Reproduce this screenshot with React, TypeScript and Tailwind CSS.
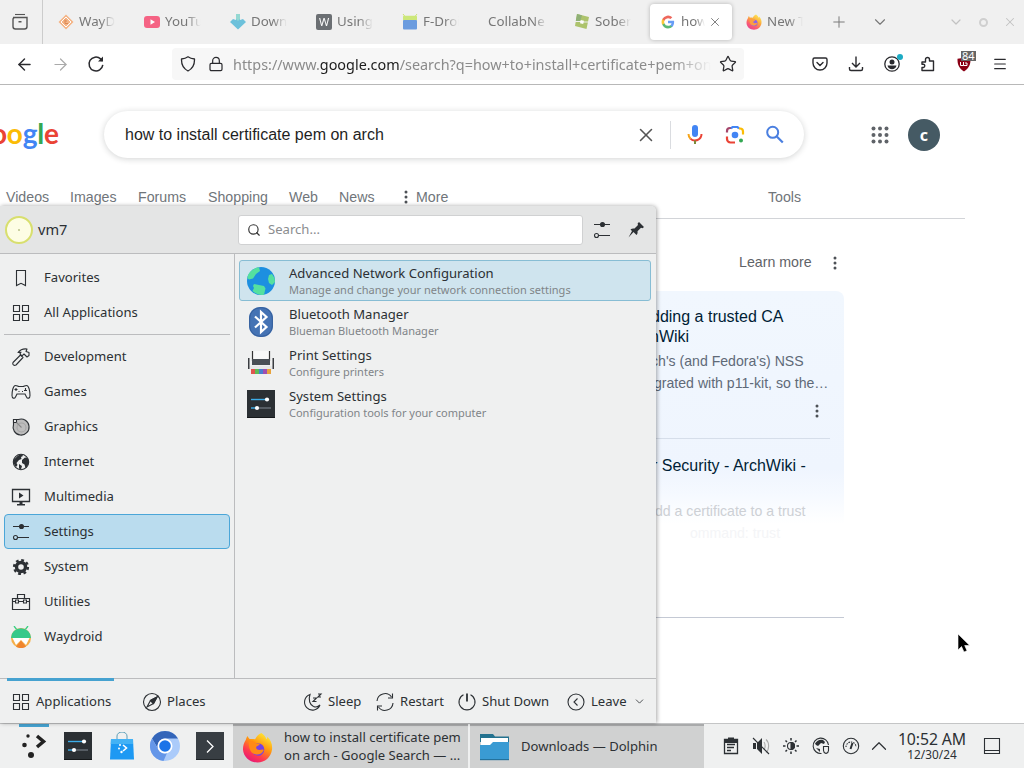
import React from 'react';
import { ArrowLeft, ArrowRight, ChevronDown, ChevronUp, Lock, Menu, Plus, Search, Star, X } from 'lucide-react';
import clsx from 'clsx';

interface IconProps {
  size?: number;
  box?: number;
  className?: string;
  children: React.ReactNode;
}

// Line icon on a square grid, strokes follow the text colour
const Line: React.FC<IconProps> = ({ size = 22, box = 22, className, children }) => (
  <svg
    width={size}
    height={size}
    viewBox={`0 0 ${box} ${box}`}
    fill="none"
    stroke="currentColor"
    strokeWidth="1.1"
    className={clsx('shrink-0', className)}
  >
    {children}
  </svg>
);

const Pic: React.FC<IconProps> = ({ size = 16, box = 16, className, children }) => (
  <svg width={size} height={size} viewBox={`0 0 ${box} ${box}`} className={clsx('shrink-0', className)}>
    {children}
  </svg>
);

const GridIcon = () => (
  <Line>
    <path d="M3.5 3.5h6v6h-6zM12.5 3.5h6v6h-6zM3.5 12.5h6v6h-6zM12.5 12.5h6v6h-6z" />
  </Line>
);

const SlidersIcon = () => (
  <Line>
    <path d="M3 5.5h16M7.5 16.5H19" />
    <circle cx="11.5" cy="5.5" r="2" fill="currentColor" />
    <circle cx="5.5" cy="16.5" r="2" />
  </Line>
);

const SettingsTile = ({ size = 28 }: { size?: number }) => (
  <Pic size={size} box={28}>
    <rect width="28" height="28" fill="#2b3034" />
    <path d="M0 27h28v1H0z" fill="#15181a" />
    <path d="M4 9.5h16" stroke="#3daee9" strokeWidth="1.4" />
    <path d="M12 18h12" stroke="#69727a" strokeWidth="1.4" />
    <path d="M4 18h6" stroke="#3daee9" strokeWidth="1.4" />
    <circle cx="20" cy="9.5" r="2.1" fill="#fff" />
    <circle cx="10" cy="18" r="2.1" fill="#fff" />
  </Pic>
);

const FirefoxIcon = ({ size = 16 }: { size?: number }) => (
  <Pic size={size} box={32}>
    <defs>
      <linearGradient id="fx" x1="0.8" y1="0" x2="0.2" y2="1">
        <stop offset="0" stopColor="#fff13a" />
        <stop offset="0.4" stopColor="#ff980e" />
        <stop offset="0.7" stopColor="#ff3b4f" />
        <stop offset="1" stopColor="#e3127e" />
      </linearGradient>
    </defs>
    <path
      d="M20 1c3 2 4.500 4 5 6.500 1-.5 1-1.500 1-2.500C30 8.500 31.500 13 31 18c-1 8-7.500 13.500-15 13.500S1.500 26 1 18c0-4 1-7 3-10 .5-2 1-3 2-4 .3 1.500 1 2.500 2 3.300 2-.3 4-.2 5.500.3C15.500 4 17 2 20 1z"
      fill="url(#fx)"
    />
    <circle cx="16.500" cy="18" r="6.500" fill="#7542e5" />
    <path d="M7 10c3-1 5.500-.5 7.500 1.500l4 .5c-.5 1.800-2.500 2-3.500 3-1 1.500 0 3.500 3 3.500 2 0 3-.8 4.500 0-1.500 4-5.500 5.500-9 4.500C9 22 6.500 17 7 10z" fill="#ff8a16" />
  </Pic>
);

const GoogleG = () => (
  <Pic size={14} box={24} className="opacity-80">
    <path d="M22.500 12.200c0-.8 0-1.500-.2-2.200H12v4.300h6a5 5 0 0 1-2.200 3.400v2.800h3.600c2-2 3.100-4.800 3.100-8.300z" fill="#4285f4" />
    <path d="M12 23c3 0 5.500-1 7.300-2.700l-3.600-2.800c-1 .7-2.200 1-3.700 1a6.600 6.600 0 0 1-6.200-4.500H2.200v2.800A11 11 0 0 0 12 23z" fill="#34a853" />
    <path d="M5.800 14a6.600 6.600 0 0 1 0-4.200V7H2.200a11 11 0 0 0 0 9.900z" fill="#fbbc05" />
    <path d="M12 5.400c1.600 0 3 .6 4.200 1.600l3.200-3.100A11 11 0 0 0 2.200 7l3.600 2.900A6.600 6.600 0 0 1 12 5.400z" fill="#ea4335" />
  </Pic>
);

const tabs: { title: string; icon?: React.ReactNode; active?: boolean }[] = [
  {
    title: 'WayDr',
    icon: (
      <Pic>
        <path d="M8 .5 15.500 8 8 15.500.5 8z" fill="#f6a66c" />
        <path d="M8 3 13 8 8 13 3 8z" fill="none" stroke="#fff" />
        <path d="M7 5.500v4h3M7 7h2" stroke="#d86f2c" fill="none" />
      </Pic>
    ),
  },
  {
    title: 'YouTu',
    icon: (
      <Pic>
        <rect y="2" width="16" height="12" rx="3" fill="#f7406a" />
        <path d="M6.500 5.300v5.400L11 8z" fill="#fff" />
      </Pic>
    ),
  },
  {
    title: 'Down',
    icon: (
      <Pic>
        <path d="M6 0h4v6l3-1 3 3-8 7.500L0 8l3-3 3 1z" fill="#4db6d6" />
        <path d="M6 0h4v5l-2 2-2-2z" fill="#7ed3cb" />
      </Pic>
    ),
  },
  {
    title: 'Using',
    icon: (
      <span className="flex size-4 shrink-0 items-center justify-center rounded-[2px] bg-[#4b5055] text-[11px] text-white">W</span>
    ),
  },
  {
    title: 'F-Droi',
    icon: (
      <Pic>
        <path d="M1 0 3 2.500M15 0l-2 2.500" stroke="#c0de50" />
        <rect x="1" y="1.800" width="14" height="5" rx="1" fill="#c4e65c" />
        <rect x="1" y="6" width="14" height="9.500" rx="1" fill="#4a88dc" />
      </Pic>
    ),
  },
  { title: 'CollabNe' },
  {
    title: 'Sober',
    icon: (
      <Pic>
        <path d="M3 0l12 3-2.500 12L1 12z" fill="#9db84c" />
        <path d="M3 0l5 1.300L6 8 1.800 7z" fill="#77a158" />
        <path d="M0 7.500h7M9 8h7" stroke="#f0f0f0" strokeWidth="1.200" />
        <path d="m6.700 6 3.300.8-.8 3.200L6 9.200z" fill="#fff" />
      </Pic>
    ),
  },
  { title: 'how', icon: <GoogleG />, active: true },
  { title: 'New T', icon: <FirefoxIcon /> },
];

const TabBar = () => (
  <div className="flex h-[44px] shrink-0 items-center bg-[#f0f0f0] text-[13.330px] text-[#777]">
    <div className="mr-[5px] flex h-full w-[43px] items-center justify-center border-r border-[#ccc] pr-[3px] text-[#555]">
      <Line size={18} box={18}>
        <path d="M4 1.500h10" />
        <path d="M2 4.500h14v9a2.500 2.500 0 0 1-2.500 2.500h-9A2.500 2.500 0 0 1 2 13.500v-7a2 2 0 0 1 2-2M7.500 8.800h3" strokeWidth="1.400" />
      </Line>
    </div>
    {tabs.map((tab) => (
      <div
        key={tab.title}
        className={clsx(
          'mr-1 flex h-9 w-[82px] shrink-0 items-center rounded pl-2.5',
          tab.active && 'bg-white shadow-[0_0_4px_rgba(0,0,0,0.25)]'
        )}
      >
        {tab.icon && (
          <span className={clsx('mr-[5px] flex w-4 justify-center', !tab.active && 'opacity-80')}>{tab.icon}</span>
        )}
        <span
          className={clsx(
            'whitespace-nowrap',
            tab.active ? 'w-6' : tab.icon ? 'w-9' : 'w-[60px]',
            tab.icon
              ? '[mask-image:linear-gradient(to_right,black_60%,transparent)]'
              : '[mask-image:linear-gradient(to_right,black_75%,transparent)]'
          )}
        >
          {tab.title}
        </span>
        {tab.active && <X size={14} strokeWidth={1.600} className="ml-[3px] shrink-0" />}
      </div>
    ))}
    <Plus size={18} strokeWidth={1.300} className="ml-[8px]" />
    <ChevronDown size={18} strokeWidth={1.500} className="ml-[23px]" />
    <div className="ml-auto flex items-center text-[#c2c2c2]">
      <ChevronDown size={16} strokeWidth={1.800} />
      <span className="mx-[15px] size-[9px] rounded-full border-2 border-[#cfcfcf]" />
      <X size={14} strokeWidth={1.800} className="mr-[7px]" />
    </div>
  </div>
);

const NavBar = () => (
  <div className="flex h-[41px] shrink-0 items-center border-b border-[#b8b8b8] bg-white text-[#2a2a2e]">
    <div className="flex w-[172px] items-center pl-[15px]">
      <ArrowLeft size={19} strokeWidth={1.800} />
      <ArrowRight size={19} strokeWidth={1.500} className="ml-[17px] text-[#aaa]" />
      <Line size={18} box={18} className="ml-[17px]">
        <path d="M15.800 9.800a6.900 6.900 0 1 1-2.200-5.900L15.500 6" strokeWidth="1.500" />
        <path d="M16 1.500v5h-5z" fill="currentColor" stroke="none" />
      </Line>
    </div>
    <div className="flex h-8 w-[572px] items-center rounded bg-[#f7f7f7] pl-2">
      <Line size={16} box={16}>
        <path d="M8 .8c2 1.500 4 2 6.500 2.200.2 5-1.500 9.500-6.500 12C3 12.500 1.300 8 1.500 3 4 2.800 6 2.300 8 .8z" strokeWidth="1.300" strokeLinejoin="round" />
      </Line>
      <Lock size={16} strokeWidth={1.800} className="ml-3" />
      <span className="mt-px ml-[9px] w-[478px] text-[14.400px] whitespace-nowrap text-[#8b8b8b] [mask-image:linear-gradient(to_right,black_92%,transparent)]">
        https://www.<span className="text-[#1c1c1c]">google.com</span>/search?q=how+to+install+certificate+pem+on+
      </span>
      <Star size={18} strokeWidth={1.700} className="ml-[8px]" />
    </div>
    <div className="ml-auto flex pr-1.5 [&>*]:w-9 [&>*]:flex [&>*]:justify-center">
      <span>
        <Line size={16} box={16}>
          <path d="M2.500 2h11A1.500 1.500 0 0 1 15 3.500V7a7 7 0 0 1-14 0V3.500A1.500 1.500 0 0 1 2.500 2zM5 6.500l3 3 3-3" strokeWidth="1.400" strokeLinecap="round" />
        </Line>
      </span>
      <span>
        <Line size={16} box={16}>
          <path d="M8 .5v10M4 7l4 4 4-4M1.500 11v2a1.500 1.500 0 0 0 1.500 1.500h10a1.500 1.500 0 0 0 1.500-1.500v-2" strokeWidth="1.400" />
        </Line>
      </span>
      <span className="relative">
        <Line size={16} box={16}>
          <circle cx="8" cy="8" r="7.200" strokeWidth="1.300" />
          <circle cx="8" cy="6" r="2.500" fill="currentColor" stroke="none" />
          <path d="M3.500 9.500h9c-.5 2.500-2.300 3.800-4.500 3.800s-4-1.300-4.500-3.800z" fill="currentColor" stroke="none" />
        </Line>
        <i className="absolute -top-[2px] left-[23px] size-[6px] rounded-full bg-[#1cabc4]" />
      </span>
      <span>
        <Line size={16} box={16}>
          <path d="M2 6h3.500V3.500a2 2 0 0 1 4 0V5H13.500v9.500H2V11.500h1.500a1.700 1.700 0 0 0 0-3.300H2z" strokeWidth="1.400" strokeLinejoin="round" />
        </Line>
      </span>
      <span className="relative">
        <Pic>
          <path d="M8 1c2 1.200 4 1.600 6.500 1.800.2 5.500-1.500 9.700-6.500 12.700C3 12.500 1.300 8.300 1.500 2.800 4 2.600 6 2.200 8 1z" fill="#8b0015" />
          <path d="M4.500 6v3.500h3V6m0 3.500h3.500V7h-2" stroke="#fff" fill="none" />
        </Pic>
        <b className="absolute -top-[5px] left-[15px] h-[10px] bg-[#666] px-px text-[11px] leading-[10px] font-normal text-white">84</b>
      </span>
      <span>
        <Menu size={16} strokeWidth={1.700} />
      </span>
    </div>
  </div>
);

const Dots = () => (
  <svg width="4" height="14" fill="#4d5156" className="shrink-0">
    <circle cx="2" cy="2" r="1.500" />
    <circle cx="2" cy="7" r="1.500" />
    <circle cx="2" cy="12" r="1.500" />
  </svg>
);

const SearchPage = () => (
  <div className="flex flex-1 flex-col bg-white font-['Liberation_Sans',Arial,sans-serif]">
    <div className="mt-[26px] flex h-[47px] items-center">
      <div className="mb-[3px] flex w-[104px] font-['Lato',sans-serif] text-[28px] leading-[36px] font-bold">
        <div className="-ml-[9px] flex tracking-[-0.250px]">
          <span className="text-[#ea4335]">o</span>
          <span className="text-[#fbbc05]">o</span>
          <span className="text-[#4285f4]">g</span>
          <span className="text-[#34a853]">l</span>
          <span className="text-[#ea4335]">e</span>
        </div>
      </div>
      <div className="flex h-[47px] w-[700px] items-center rounded-full pl-[21px] shadow-[0_1px_6px_rgba(32,33,36,0.2)]">
        <span className="w-[510px] text-base text-[#1f1f1f]">how to install certificate pem on arch</span>
        <X size={22} strokeWidth={1.700} className="text-[#555]" />
        <span className="ml-[13px] h-[28px] w-px bg-[#dadce0]" />
        <Pic size={24} box={24} className="ml-3">
          <rect x="9" y="2" width="6" height="12" rx="3" fill="#4285f4" />
          <path d="M7.400 15.600A6.500 6.500 0 0 0 18.500 11" fill="none" stroke="#ea4335" strokeWidth="2" />
          <path d="M5.500 11a6.500 6.500 0 0 0 2 4.700" fill="none" stroke="#f6a51a" strokeWidth="2" />
          <path d="M12 17.500V21" stroke="#7b8c3a" strokeWidth="2" />
        </Pic>
        <Pic size={24} box={24} className="ml-4">
          <g fill="none" strokeWidth="2.200">
            <path d="M4 9.500V8a3 3 0 0 1 3-3h1.500" stroke="#a4456b" />
            <path d="M8 5.500 9.500 4h5L16 5.500" stroke="#4285f4" />
            <path d="M16 5.500h1a3 3 0 0 1 3 3v3" stroke="#fbbc05" />
            <path d="M4 13.500V16a3.500 3.500 0 0 0 3.500 3.500H12" stroke="#ea4335" />
          </g>
          <circle cx="12" cy="12" r="3.300" fill="#4285f4" />
          <circle cx="18" cy="17.500" r="2" fill="#34a853" />
        </Pic>
        <Pic size={24} box={24} className="ml-4">
          <circle cx="9.700" cy="9.300" r="5.500" fill="none" stroke="#4a7fe0" strokeWidth="2" />
          <path d="m13.800 13.500 6 6" stroke="#4a7fe0" strokeWidth="2.200" />
        </Pic>
      </div>
      <Pic size={18} box={18} className="ml-[67px]">
        {[2, 8.5, 15].map((y) => [2, 8.5, 15].map((x) => <circle key={`${x}-${y}`} cx={x + 0.5} cy={y + 0.5} r="2" fill="#5f6368" />))}
      </Pic>
      <div className="ml-[19px] flex size-8 items-center justify-center rounded-full bg-[#455a64] font-['Noto_Sans',sans-serif] text-base leading-4 font-bold text-white">
        c
      </div>
    </div>

    <div className="mt-[29px] flex h-[32px] w-[965px] border-b border-[#d2d4d8] pl-1.5 text-[14.200px] leading-5 text-[#70757a]">
      <span className="w-16">Videos</span>
      <span className="w-[68px]">Images</span>
      <span className="w-[70px]">Forums</span>
      <span className="w-[81px]">Shopping</span>
      <span className="w-[50px]">Web</span>
      <span className="w-[65px]">News</span>
      <span className="flex h-5 w-3 items-center"><Dots /></span>
      <span className="w-[352px]">More</span>
      <span>Tools</span>
    </div>

    <div className="ml-[648px] flex w-[196px] flex-col">
      <div className="mt-[34px] flex h-5 items-center pl-[91px] text-[14.200px] text-[#5f6368]">
        <span className="w-[94px]">Learn more</span>
        <Dots />
      </div>
      <div className="mt-[18px] h-[253px] rounded-r-lg bg-[linear-gradient(to_bottom,#f1f7fe,#eff5fe_70%,#f5f9ff_80%,white_92%)] pt-4 pr-3.5">
        <div className="text-base leading-5 whitespace-nowrap text-[#001d35]">
          <p className="pl-[3px]">dding a trusted CA</p>
          <p className="pl-[2px]">hWiki</p>
        </div>
        <div className="mt-[3px] text-[14.100px] leading-[22px] whitespace-nowrap text-[#5f6a78]">
          <p className="pl-[3px]">ch's (and Fedora's) NSS</p>
          <p className="pl-[6px]">grated with p11-kit, so the…</p>
        </div>
        <div className="mt-[10px] flex justify-end pr-[11px]"><Dots /></div>
        <div className="mt-5 border-b border-[#d6deea]" />
        <p className="mt-[17px] pl-[4px] text-base leading-5 text-[#001d35]">r Security - ArchWiki -</p>
        <div className="mt-[24px] text-[14.100px] leading-[22px] whitespace-nowrap">
          <p className="pl-[7px] text-[#cdd0d5]">dd a certificate to a trust</p>
          <p className="pl-[42px] text-[#f4f5f7]">ommand: trust</p>
        </div>
      </div>
      <div className="mt-[73px] border-b border-[#c4c9d4]" />
    </div>
  </div>
);

const categories: { name: string; icon: React.ReactNode; active?: boolean }[] = [
  {
    name: 'Development',
    icon: (
      <Line>
        <path d="m3 16.500 7.500-7.500 2.500 2.500L6 19c-2 1-4-.5-3-2.500zM8 6.500c2-2.500 5-4 9-3.500l-1 2.500 3 1v3l-2 1.500-3-3-2 1.800-2-2 1-1.500z" strokeLinejoin="round" />
      </Line>
    ),
  },
  {
    name: 'Games',
    icon: (
      <Line>
        <path d="M5.500 4.500c2 0 2 1 3.500 1h4c1.500 0 1.500-1 3.500-1 2.500 0 3.500 6 3.500 10 0 3-2.500 3.500-3.500 1.500l-1.500-3H7l-1.500 3C4.500 18 2 17.500 2 14.500c0-4 1-10 3.500-10z" />
        <path d="M6 7v3M4.500 8.500h3M15.500 7v3M14 9.500h3M8.500 10.500h1M12 10.500h1" />
      </Line>
    ),
  },
  {
    name: 'Graphics',
    icon: (
      <Line>
        <path d="M3.500 3.500h5a8 8 0 1 1-5 5z" fill="#bdbdbd" />
        <circle cx="11.500" cy="11.500" r="4.500" stroke="#a5a5a5" />
        <path d="M3.500 3.500h3v3h-3z" fill="#eff0f1" />
        <path d="m6.500 6.500 5 5" stroke="#888" />
      </Line>
    ),
  },
  {
    name: 'Internet',
    icon: (
      <Line>
        <circle cx="11" cy="11" r="7.700" />
        <path d="M11 3.300 8 4.500l-4 4c-.8 3 0 5.500 2 7.500l1.500-2-1-2 2.500-3 2.500-1-.5-2 2-1-1-1.700zM12 9l3-2.500 2.500.5 1.200 3c0 3-1.200 5.500-3.200 7l-1-3.500L12 12zM9 13l3 2-1 3.500-2-1z" fill="currentColor" stroke="none" />
      </Line>
    ),
  },
  {
    name: 'Multimedia',
    icon: (
      <Line>
        <path d="M2.500 3.500h17v12h-17z" strokeWidth="1.300" />
        <path d="M9 6.500v6l4.500-3zM9.500 16h3v2H15v1.500H7V18h2.500z" fill="currentColor" stroke="none" />
      </Line>
    ),
  },
  { name: 'Settings', icon: <SlidersIcon />, active: true },
  {
    name: 'System',
    icon: (
      <Line>
        <circle cx="11" cy="11" r="4.500" strokeWidth="3.400" />
        <circle cx="11" cy="11" r="6.900" strokeWidth="2.400" strokeDasharray="2.800 2.620" />
      </Line>
    ),
  },
  {
    name: 'Utilities',
    icon: (
      <Line>
        <path d="M2.500 18.500V7.500h17v11zM7.500 7V3.500h7V7M2.500 10.500h2.500m4 0h4m4 0h2.500" strokeWidth="1.200" />
        <path d="M5.500 9h3v3h-3zM13.500 9h3v3h-3z" />
      </Line>
    ),
  },
  {
    name: 'Waydroid',
    icon: (
      <Pic size={22} box={22}>
        <path d="m4 0 3 4M18 0l-3 4" stroke="#3bd183" strokeWidth="1.300" />
        <circle cx="11" cy="12" r="10" fill="#f5b04a" />
        <path d="M1 12a10 9.800 0 0 1 20 0z" fill="#36c98a" />
        <path d="m2.500 12 3.500 7 5-5 5 5 3.500-7z" fill="#fff" />
        <path d="m6 20.700 5-6.200 5 6.200a10 10 0 0 1-10 0z" fill="#f0852d" />
      </Pic>
    ),
  },
];

const apps: { name: string; description: string; icon: React.ReactNode; active?: boolean }[] = [
  {
    name: 'Advanced Network Configuration',
    description: 'Manage and change your network connection settings',
    active: true,
    icon: (
      <Pic size={28} box={28}>
        <circle cx="14" cy="14" r="14" fill="#1d8fe0" />
        <path d="M12 .2C6 1 1 5.500.3 11L2 12.500l4-1L9 7l4-3zM22 8l3-1 2.500 4 .5 4-3 3-3-2-1-4zM7 17l5 1 5 1 1.500 2.500L17 27.700C12 28.500 8 26.500 5.500 24L7 21l-1-2z" fill="#55e0a0" />
      </Pic>
    ),
  },
  {
    name: 'Bluetooth Manager',
    description: 'Blueman Bluetooth Manager',
    icon: (
      <Pic size={30} box={30}>
        <rect x="3" width="24" height="30" rx="11" fill="#4573b4" />
        <rect x="3.700" y=".7" width="22.600" height="28.600" rx="10.500" fill="none" stroke="#355f9c" />
        <path d="m9 9.500 11.500 10.500-5.500 5V5l5.500 5L9 20.500" fill="none" stroke="#fff" strokeWidth="2.200" />
      </Pic>
    ),
  },
  {
    name: 'Print Settings',
    description: 'Configure printers',
    icon: (
      <Pic size={28} box={28}>
        <path d="M5 2h18v12H5z" fill="#f8f8f8" />
        <path d="M5.500 2v10M22.500 2v10" stroke="#333" strokeWidth="1.200" />
        <path d="M5 10h18v6H5z" fill="#4a4f55" />
        <path d="M1 9h1.500v8h23V9H27v11H1z" fill="#3a3d41" />
        <path d="M2.500 17h23v3h-23z" fill="#e8e8e8" />
        <path d="M4 20h4v5H4z" fill="#e0554e" />
        <path d="M8 20h4v5H8z" fill="#5ebb57" />
        <path d="M12 20h4v5h-4z" fill="#4a7fd0" />
        <path d="M16 20h4v5h-4z" fill="#a14fb0" />
        <path d="M20 20h4v5h-4z" fill="#e8a33c" />
      </Pic>
    ),
  },
  { name: 'System Settings', description: 'Configuration tools for your computer', icon: <SettingsTile /> },
];

const SidebarRow = ({ name, icon, active }: { name: string; icon: React.ReactNode; active?: boolean }) => (
  <div
    className={clsx(
      'ml-1 flex h-[35px] w-[226px] items-center rounded border pl-[5px]',
      active ? 'border-[#4ba6d8] bg-[#badcee]' : 'border-transparent'
    )}
  >
    {icon}
    <span className="ml-[12px]">{name}</span>
  </div>
);

const LauncherMenu = () => (
  <div className="absolute top-[206px] left-0 flex h-[517px] w-[656px] flex-col rounded-tr-[5px] bg-[#eff0f0] text-[13.100px] text-[#2c3034] shadow-[1px_0_4px_rgba(0,0,0,0.35)]">
    <div className="flex h-12 shrink-0 items-center rounded-tr-[5px] border-b border-[#bbbcbe] bg-[#e4e5e5]">
      <div className="ml-[5px] flex size-7 items-center justify-center rounded-full border-2 border-[#d8df6e] bg-[#fdfde4]">
        <span className="size-[2px] rounded-full bg-[#b9c08a]" />
      </div>
      <span className="ml-[5px] w-[200px] text-[14.600px]">vm7</span>
      <div className="flex h-[30px] w-[345px] items-center rounded-[3px] border border-[#d0d1d2] bg-white pl-[8px] text-[#8b8d8f]">
        <Search size={14} strokeWidth={2} className="text-[#333]" />
        <span className="ml-[7px]">Search...</span>
      </div>
      <span className="ml-[8px]"><SlidersIcon /></span>
      <Line className="ml-[12px]">
        <path d="m14 3 5 5-1.500 1.200-1.500-.4-3.500 3.500c.3 1.500 0 2.700-1 3.700L8.500 13 3.500 18.500 7 12l-1.500-1.500c1-1 2.500-1.300 4-1L13 6l-.4-1.500z" fill="currentColor" stroke="none" />
      </Line>
    </div>

    <div className="flex min-h-0 flex-1">
      <div className="w-[235px] shrink-0 border-r border-[#bbbcbe] pt-[6px]">
        <SidebarRow
          name="Favorites"
          icon={
            <Line>
              <path d="M6.500 3.500h9v15L11 16.300 6.500 18.500z" />
            </Line>
          }
        />
        <SidebarRow name="All Applications" icon={<GridIcon />} />
        <div className="mt-1 mb-1 ml-1 w-[226px] border-b border-[#bbbcbe]" />
        {categories.map((c) => (
          <SidebarRow key={c.name} {...c} />
        ))}
      </div>
      <div className="flex-1 pt-[6px] pl-1">
        {apps.map((app) => (
          <div
            key={app.name}
            className={clsx(
              'flex h-[41px] w-[412px] items-center rounded-[3px] border',
              app.active ? 'border-[#87bdd4] bg-[#cfe4ee]' : 'border-transparent'
            )}
          >
            <span className="flex w-[42px] justify-center">{app.icon}</span>
            <div className="mt-[2px] ml-[7px] whitespace-nowrap">
              <p className="text-[13.100px] leading-[17px]">{app.name}</p>
              <p className="text-[11px] leading-4 text-[#808488]">{app.description}</p>
            </div>
          </div>
        ))}
      </div>
    </div>

    <div className="relative flex h-[45px] shrink-0 items-center border-t border-[#bbbcbe] pt-px pl-[10px]">
      <i className="absolute -top-px left-[7px] h-[3px] w-[107px] bg-[#46a2d0]" />
      <GridIcon />
      <span className="ml-1 w-[105px]">Applications</span>
      <Line>
        <circle cx="11" cy="11" r="8.500" />
        <path d="M16 6 9.500 9.500 6 16l6.500-3.500zM9.500 9.500l3 3" />
        <path d="M16 6 9.500 9.500l3 3z" fill="currentColor" />
      </Line>
      <span className="ml-[4px] w-[135px]">Places</span>
      <Line>
        <path d="M8 3.500a8 8 0 1 0 10 10.500 6 6 0 0 1-6.500 1.500C8 14 6 9 8 3.500zM11 7h3.500l-3.500 3.500h3.500M16 3h3l-3 3h3" />
      </Line>
      <span className="ml-[4px] w-[46px]">Sleep</span>
      <Line>
        <path d="M3 10a8 8 0 0 1 14.500-4M19 12a8 8 0 0 1-14.500 4M18.500 2.500V7H14M3.500 19.500V15H8" />
      </Line>
      <span className="ml-[4px] w-[56px]">Restart</span>
      <Line>
        <path d="M7.500 3.700a8 8 0 1 0 7 0" />
        <path d="M11 2.500v8" strokeWidth="1.800" />
      </Line>
      <span className="ml-[4px] w-[83px]">Shut Down</span>
      <Line>
        <circle cx="11" cy="11" r="8" />
        <path d="m12.500 7.500-3.500 3.500 3.500 3.500" />
      </Line>
      <span className="ml-[4px] w-[42px]">Leave</span>
      <ChevronDown size={13} strokeWidth={1.500} />
    </div>
  </div>
);

const Taskbar = () => (
  <div className="flex h-[45px] shrink-0 border-t border-[#c4c5c6] bg-[#eff0f0] text-[13.050px] text-[#2c3034]">
    <div className="relative flex w-[233px] items-center pl-[19px]">
      <i className="absolute top-0 left-[19px] h-[3px] w-[30px] bg-[#46a2d0]" />
      <Pic size={28} box={28}>
        <g fill="#222">
          <circle cx="9" cy="4" r="1.700" />
          <circle cx="5.500" cy="13" r="2.300" />
          <circle cx="12" cy="23" r="3" />
        </g>
        <path d="m18 4 6.500 5.500-6.500 5.500" fill="none" stroke="#222" strokeWidth="3.500" />
      </Pic>
      <span className="ml-[17px]"><SettingsTile /></span>
      <Pic size={28} box={28} className="ml-4">
        <path d="M9 8V4a5 4 0 0 1 10 0v4" fill="none" stroke="#5a9eb8" />
        <path d="M3 7h22l1 20.500H2z" fill="#1d99f3" />
        <path d="M3 7h22v5H2.700z" fill="#43b2f5" />
        <circle cx="12" cy="13" r="1" fill="#fff" />
        <circle cx="11" cy="16.500" r="1" fill="#fff" />
        <circle cx="13.500" cy="20" r="1.200" fill="#fff" />
        <path d="m15 13 3.500 3-3.500 3" fill="none" stroke="#fff" strokeWidth="1.600" />
      </Pic>
      <Pic size={30} box={30} className="ml-[14px]">
        <circle cx="15" cy="15" r="15" fill="#abcbfa" />
        <path d="M15 0a15 15 0 0 1 13 7.500H15A7.500 7.500 0 0 0 8.500 18.500L2 7.500A15 15 0 0 1 15 0z" fill="#3365b9" />
        <path d="M2 7.500 8.500 19A7.500 7.500 0 0 0 17 22l-3.500 8A15 15 0 0 1 2 7.500z" fill="#6496e8" />
        <circle cx="15" cy="15" r="7.500" fill="#fff" />
        <circle cx="15" cy="15" r="5.800" fill="#1a73e8" />
      </Pic>
      <Pic size={28} box={28} className="ml-4">
        <rect width="28" height="28" fill="#383e43" />
        <path d="M0 27h28v1H0z" fill="#202427" />
        <path d="m11 8.500 6 6-6 6" fill="none" stroke="#fff" strokeWidth="1.300" />
      </Pic>
    </div>
    <div className="flex w-[235px] items-center border-t-2 border-[#a9aaab] bg-[#d0d1d1] pl-[9px] whitespace-nowrap">
      <FirefoxIcon size={31} />
      <div className="mb-[2px] ml-[11px] leading-[18px]">
        <p>how to install certificate pem</p>
        <p>on arch - Google Search — ...</p>
      </div>
    </div>
    <div className="ml-[2px] flex w-[234px] items-center border-t-2 border-[#a9aaab] bg-[#d0d1d1] pl-[9px]">
      <Pic size={31} box={31}>
        <path d="M1 2h13l2 2.500h14V10H1z" fill="#24728f" />
        <path d="M2 6h27v10H2z" fill="#fff" />
        <path d="M1 13h10l3-3h16v18H1z" fill="#3a9bd3" />
        <path d="M1 27h29v1.200H1z" fill="#24729c" />
      </Pic>
      <span className="ml-[11px]">Downloads — Dolphin</span>
    </div>
    <div className="flex flex-1 items-center pl-[16px]">
      <Line>
        <path d="M4.500 4.500h13v14h-13zM7 9.500h8M7 12.500h7M7 15.500h4" strokeWidth="1.300" />
        <path d="M4 4h4V2.500h6V4h4v4H4z" fill="currentColor" stroke="none" />
      </Line>
      <Line className="ml-[8px]">
        <path d="M3 8h3v6H3zM7 8l5-5v16l-5-5z" fill="currentColor" stroke="none" />
        <path d="M14 7c1.500 2 1.500 6 0 8M16 4.500c3.500 3 3.500 10 0 13" stroke="#aaa" />
        <path d="m3 3 16 16" />
      </Line>
      <Line className="ml-[8px]">
        <circle cx="11" cy="11" r="3.500" />
        <path d="M11 7.500a3.500 3.500 0 0 1 0 7z" fill="currentColor" />
        <path d="M11 3v2.500M11 16.500V19M3 11h2.500M16.500 11H19M5.500 5.500 7 7M15 15l1.500 1.500M16.500 5.500 15 7M7 15l-1.500 1.500" strokeWidth="1.500" />
      </Line>
      <Line className="ml-[8px]">
        <path d="M11.500 18.500a7.700 7.700 0 1 1 7-8.500" />
        <path d="M5 8.500c2-3 5-4.500 8-3.500l2 2-1 2-3-1-3 3-2-1zM6 13l4 1v3z" fill="currentColor" stroke="none" />
        <path d="M13.500 11.500h5v4c0 1.500-1 2.500-2.500 3-1.500-.5-2.500-1.500-2.500-3z" fill="#eff0f0" />
      </Line>
      <Line className="ml-[8px]">
        <circle cx="11" cy="11" r="7.700" />
        <path d="M6 12a5 5 0 1 1 10 0" strokeDasharray="1.500 1" />
        <path d="m10.500 14 2-6" strokeWidth="2" />
      </Line>
      <ChevronUp size={26} strokeWidth={1.100} className="ml-1" />
      <div className="w-[80px] text-center">
        <p className="text-[15.800px] leading-[16px] tracking-[-0.100px] whitespace-nowrap">10:52 AM</p>
        <p className="text-[11.800px] leading-[14px]">12/30/24</p>
      </div>
      <Line className="ml-[9px]">
        <path d="M3.500 3.500h15v15h-15zM3.500 15.500h15" />
      </Line>
    </div>
  </div>
);

const App: React.FC = () => {
  return (
    <div className="relative flex h-[768px] w-[1024px] flex-col overflow-hidden bg-white font-['Noto_Sans',sans-serif]">
      <TabBar />
      <NavBar />
      <SearchPage />
      <Taskbar />
      <LauncherMenu />
      {/* mouse pointer */}
      <svg width="14" height="20" viewBox="0 0 14 20" className="absolute top-[633px] left-[957px]">
        <path d="M1 1v16l3.500-3.500L7 19l3-1.300-2.300-5.200h5z" fill="#000" stroke="#fff" strokeWidth=".6" />
      </svg>
    </div>
  );
};

export default App;
